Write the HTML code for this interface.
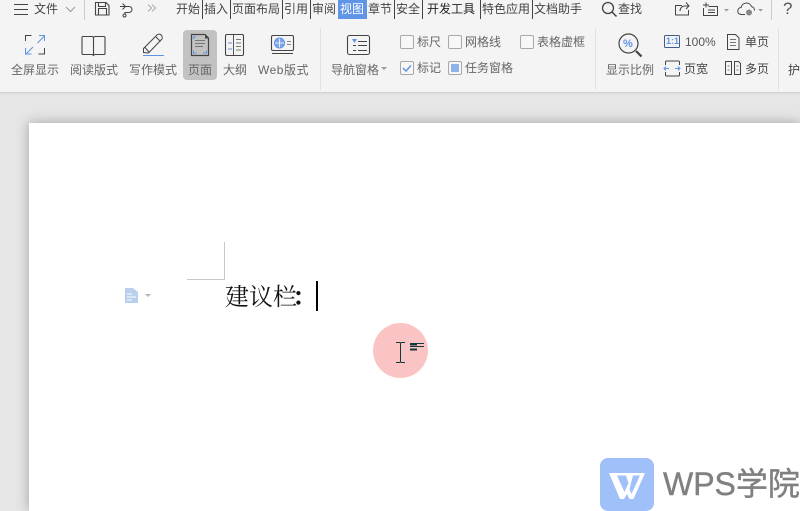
<!DOCTYPE html>
<html><head><meta charset="utf-8">
<style>
html,body{margin:0;padding:0;width:800px;height:511px;overflow:hidden;background:#e6e6e6;font-family:"Liberation Sans","Noto Sans CJK SC",sans-serif}
.a{position:absolute;white-space:nowrap}
.t{position:absolute;white-space:nowrap;font-size:12px;line-height:16px;color:#444}
.g{color:#666}
.sep{position:absolute;width:1px;background:#444;top:0;height:19px}
.vs{position:absolute;width:1px;background:#e2e2e2;top:28px;height:62px}
.cb{position:absolute;width:12px;height:12px;border:1px solid #a8a8a8;border-radius:2px;background:#f7f7f7}
svg{position:absolute;overflow:visible}
</style></head><body>
<div class="a" style="left:0;top:0;width:800px;height:92px;background:#f4f4f4;box-shadow:0 1px 2px rgba(0,0,0,.12)"></div>
<!-- page -->
<div class="a" style="left:29px;top:123px;width:771px;height:388px;background:#fff;box-shadow:0 0 12px rgba(0,0,0,.3)"></div>

<!-- top row -->
<svg style="left:0;top:0" width="800" height="92" fill="none" stroke="#444" stroke-width="1">
<path d="M14 4.500h14M14 9.500h14M14 14.500h14"/>
<path d="M66 7l4.500 4.500 4.500-4.500" stroke="#999"/>
<path d="M84.500 0v20" stroke="#ccc"/>
<path d="M95.500 2.500h10.500l3 3v9.500h-13.500zM98.500 3v3.500h7v-3.500M98.500 15v-6.500h8v6.500" stroke-width="1.100"/>
<path d="M120 6.500h9a3 3 0 0 1 0 6h-4v1.500M122.500 3.500l3 3-3 3"/>
<circle cx="124.500" cy="15.500" r="1.500"/>
<path d="M148 4.500l3.500 3.500-3.500 3.500M152 4.500l3.500 3.500-3.500 3.500" stroke="#aaa"/>
<circle cx="608" cy="8" r="5.500" stroke-width="1.300"/><path d="M612 12l4.500 4.500" stroke-width="1.500"/>
<path d="M682 5.500h-6.500v9.500h13v-5M680 11c0-3 2-5 5-5h3.500M686 2.500l3 3.500-3 3"/>
<path d="M703.500 8v7.500h14v-9h-9M703 5h6M706 2.500v5M708 10h7M708 12.500h7"/>
<path d="M724 9l5 0-2.500 2.500z" fill="#999" stroke="none"/>
<path d="M745 14.500h-3.500a3.500 3.500 0 0 1-.5-7 5.500 5.500 0 0 1 10.500-1 4 4 0 0 1 3 4"/>
<circle cx="749" cy="12.500" r="3" fill="#888" stroke="none"/>
<path d="M758 9l5 0-2.500 2.500z" fill="#999" stroke="none"/>
<path d="M771.500 0v20" stroke="#ccc"/>
</svg>
<div class="t" style="left:34px;top:1px">文件</div>
<div class="t" style="left:618px;top:1px">查找</div>
<div class="a" style="left:783px;top:-1px;font-size:17px;line-height:20px;color:#555">?</div>

<!-- tabs -->
<div class="a" style="left:338px;top:0;width:29px;height:19px;background:#5f94e6"></div>
<div class="t" style="left:176px;top:1px">开始</div><div class="sep" style="left:202px"></div>
<div class="t" style="left:204px;top:1px">插入</div><div class="sep" style="left:230px"></div>
<div class="t" style="left:232px;top:1px">页面布局</div><div class="sep" style="left:282px"></div>
<div class="t" style="left:284px;top:1px">引用</div><div class="sep" style="left:310px"></div>
<div class="t" style="left:312px;top:1px">审阅</div>
<div class="t" style="left:340px;top:1px;color:#fff">视图</div>
<div class="t" style="left:368px;top:1px">章节</div><div class="sep" style="left:394px"></div>
<div class="t" style="left:396px;top:1px">安全</div><div class="sep" style="left:422px"></div>
<div class="t" style="left:427px;top:1px;color:#222">开发工具</div><div class="sep" style="left:480px"></div>
<div class="t" style="left:482px;top:1px">特色应用</div><div class="sep" style="left:532px"></div>
<div class="t" style="left:534px;top:1px">文档助手</div>

<!-- ribbon highlight -->
<div class="a" style="left:183px;top:30px;width:34px;height:50px;background:#c2c2c2;border-radius:4px"></div>

<!-- ribbon icons -->
<svg style="left:0;top:0" width="800" height="92" fill="none" stroke="#444" stroke-width="1">
<path d="M25.500 41v-5.500h6M44.500 48v6h-6"/>
<path d="M37.500 43l7-7M39 35.500h5.500v5.500M33 47l-7 7M25.500 48v6h6" stroke="#5f94e6"/>
<path d="M83 36.500h9.500l1 1 1-1h9.500a1 1 0 0 1 1 1v16a1 1 0 0 1-1 1h-9.500l-1 1-1-1h-9.500a1 1 0 0 1-1-1v-16a1 1 0 0 1 1-1zM93.500 37.500v17" stroke-width="1.100"/>
<path d="M143.500 52.500v-4l13-13a3 3 0 0 1 5 0 3 3 0 0 1 0 4l-13 13.500zM156 37l4.500 4.500M145 47.500l4 4.500"/>
<path d="M143 55.500h21" stroke="#5f94e6"/>
<path d="M191.500 34.500h13.500l3.500 3.500v17.500h-17z" stroke-width="1.200"/>
<path d="M205 34.500l4 4h-4z" fill="#444" stroke="none"/>
<path d="M195 40.500h10M195 43.500h10M195 46.500h8" stroke="#777"/>
<path d="M193.500 39v-2h2.500M193.500 50.500v2.500h3M206.500 53h-3.500M206.500 53v-2.500" stroke="#5f94e6"/>
<rect x="225.500" y="34.500" width="18" height="21" rx="1.500" stroke-width="1.100"/>
<path d="M233.500 35v20" stroke="#555"/><path d="M228 43h4M228 49h4" stroke="#5f94e6"/><path d="M236 39.500h5M236 43h5M236 46.500h5M236 50h5" stroke="#777"/>
<rect x="271.500" y="35.500" width="22" height="15" rx="1.500" stroke-width="1.100"/><path d="M272 53.500h21"/>
<circle cx="279.500" cy="43" r="5" fill="#7da5e8" stroke="#5f94e6"/>
<path d="M275 43h9M279.500 38.500v9" stroke="#fff" stroke-width=".8"/>
<path d="M287 41.500h4M287 44.500h4" stroke="#888"/>
<rect x="347.500" y="35.500" width="22" height="19" rx="2" stroke-width="1.100"/>
<path d="M352 39h5l-2.500 4z" fill="#5f94e6" stroke="none"/>
<path d="M358 41.500h9M358 45.500h9M358 50.500h9M353 45.500h3M353 50.500h3"/>
<circle cx="628.500" cy="43.500" r="9.500" stroke-width="1.200"/>
<path d="M636 51l5.500 5.500" stroke-width="2.200"/>
<rect x="664.500" y="35.500" width="15" height="12" rx="1" stroke="#3f5f8a"/>
<path d="M665.500 65v-3a1 1 0 0 1 1-1h12a1 1 0 0 1 1 1v3M665.500 72v3a1 1 0 0 0 1 1h12a1 1 0 0 0 1-1v-3"/>
<path d="M664 68.500h5M675 68.500h5M666 66.500l-2 2 2 2M678 66.500l2 2-2 2" stroke="#5f94e6"/>
<path d="M727.500 34.500h8l3.500 3.500v11.500h-11.500z"/><path d="M730 39.500h6M730 42.500h6M730 45.500h6" stroke="#777"/>
<path d="M725.500 61.500h6v13h-6zM734.500 61.500h4l2 2v11h-6z"/><path d="M727.500 66h2M727.500 70h2M736.500 66h2M736.500 70h2" stroke="#777"/>
</svg>
<div class="a" style="left:666px;top:35px;font-size:9px;line-height:13px;color:#5f94e6;font-weight:bold">1:1</div>
<div class="a" style="left:623px;top:37px;font-size:11px;line-height:14px;color:#5f94e6;font-weight:bold">%</div>

<!-- labels -->
<div class="t g" style="left:11px;top:62px">全屏显示</div>
<div class="t g" style="left:70px;top:62px">阅读版式</div>
<div class="t g" style="left:129px;top:62px">写作模式</div>
<div class="t g" style="left:188px;top:62px">页面</div>
<div class="t g" style="left:223px;top:62px">大纲</div>
<div class="t g" style="left:258px;top:62px;letter-spacing:.5px">Web版式</div>
<div class="t g" style="left:331px;top:62px">导航窗格</div>
<svg style="left:381px;top:67px" width="7" height="4"><path d="M0 0h6l-3 3z" fill="#999"/></svg>

<div class="vs" style="left:320px"></div>
<div class="vs" style="left:595px"></div>
<div class="vs" style="left:778px"></div>

<div class="cb" style="left:400px;top:35px"></div><div class="t g" style="left:417px;top:34px">标尺</div>
<div class="cb" style="left:448px;top:35px"></div><div class="t g" style="left:465px;top:34px">网格线</div>
<div class="cb" style="left:520px;top:35px"></div><div class="t g" style="left:537px;top:34px">表格虚框</div>
<div class="cb" style="left:400px;top:61px"></div><div class="t g" style="left:417px;top:60px">标记</div>
<svg style="left:400px;top:61px" width="14" height="14" fill="none"><path d="M3 7l3 3 5-5.500" stroke="#5f94e6" stroke-width="1.500"/></svg>
<div class="cb" style="left:448px;top:61px"></div><div class="a" style="left:451px;top:64px;width:8px;height:8px;background:#8fb2ea"></div>
<div class="t g" style="left:465px;top:60px">任务窗格</div>

<div class="t g" style="left:606px;top:62px">显示比例</div>
<div class="t" style="left:685px;top:34px;color:#555">100%</div>
<div class="t" style="left:745px;top:34px">单页</div>
<div class="t" style="left:684px;top:61px">页宽</div>
<div class="t" style="left:745px;top:61px">多页</div>
<div class="t" style="left:788px;top:62px">护</div>

<!-- document -->
<svg style="left:0;top:0" width="800" height="511" fill="none">
<path d="M187 279.500h37.500V242" stroke="#c8c8c8"/>
<path d="M125 288h8l5 4v11h-13z" fill="#b9cfee"/>
<path d="M127 294h5M127 297h9M127 300h5" stroke="#fff"/>
<path d="M145 294h6l-3 3z" fill="#b5b5b5"/>
<rect x="316" y="281" width="2" height="30" fill="#000"/>
</svg>
<div class="a" style="left:225px;top:283px;font-size:24px;line-height:30px;color:#111;font-family:'Liberation Serif','Noto Serif CJK SC',serif">建议栏<span style="position:relative;left:-5px;font-weight:bold">：</span></div>

<!-- cursor highlight -->
<div class="a" style="left:373px;top:323px;width:55px;height:55px;border-radius:50%;background:radial-gradient(circle,#fbc4c4 0,#fbc4c4 86%,#fde0e0 94%,#fff 100%)"></div>
<svg style="left:0;top:0" width="800" height="511" fill="none" stroke="#12393a">
<path d="M396 342.500h3.500l1 .5 1-.5h3.500M400.500 343v19M396 362.500h3.500l1-.5 1 .5h3.500"/>
<path d="M410 343.500h14M410 346.500h14" stroke-width="1"/><path d="M410 344.500h7M410 349.500h7" stroke-width="2"/>
</svg>

<!-- watermark -->
<div class="a" style="left:600px;top:458px;width:54px;height:53px;background:#a0c0fa;border-radius:8px"></div>
<svg style="left:600px;top:458px" width="54" height="53">
<path d="M9 15H45L33.500 41H29.500L27 36L24 41H20Z" fill="#fff"/>
<path d="M17 17.500H26L28.500 25L24.500 34Z" fill="#a0c0fa"/>
<path d="M33 17.500H40L31.500 36L29.500 31Z" fill="#a0c0fa"/>
</svg>
<div class="a" style="left:663px;top:464px;font-size:32px;line-height:40px;color:#808080;-webkit-text-stroke:.4px #808080">WPS学院</div>
</body></html>
